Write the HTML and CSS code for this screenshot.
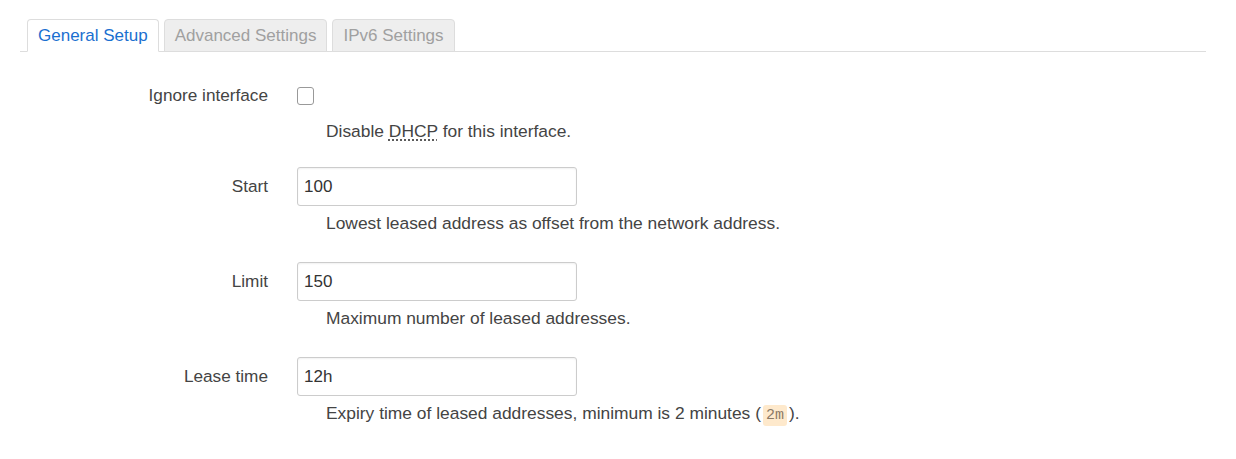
FILE: index.html
```html
<!DOCTYPE html>
<html>
<head>
<meta charset="utf-8">
<link rel="stylesheet" href="styles.css">
</head>
<body>
<div class="page">
  <ul class="tabs">
    <li class="tab active">General Setup</li>
    <li class="tab">Advanced Settings</li>
    <li class="tab">IPv6 Settings</li>
  </ul>
  <div class="form">
    <div class="row row-check">
      <label class="lbl">Ignore interface</label>
      <div class="field">
        <div class="control"><span class="checkbox"></span></div>
        <div class="desc">Disable <abbr class="abbr">DHCP</abbr> for this interface.</div>
      </div>
    </div>
    <div class="row">
      <label class="lbl">Start</label>
      <div class="field">
        <div class="control"><div class="input">100</div></div>
        <div class="desc">Lowest leased address as offset from the network address.</div>
      </div>
    </div>
    <div class="row">
      <label class="lbl">Limit</label>
      <div class="field">
        <div class="control"><div class="input">150</div></div>
        <div class="desc">Maximum number of leased addresses.</div>
      </div>
    </div>
    <div class="row">
      <label class="lbl">Lease time</label>
      <div class="field">
        <div class="control"><div class="input">12h</div></div>
        <div class="desc">Expiry time of leased addresses, minimum is 2 minutes (<code class="code">2m</code>).</div>
      </div>
    </div>
  </div>
</div>
</body>
</html>
```

FILE: styles.css
```css
* { box-sizing: border-box; }
html, body { margin: 0; padding: 0; background: #fff; }
body {
  font-family: "Liberation Sans", Arial, sans-serif;
  font-size: 17px;
  color: #404040;
}
.page {
  padding: 19px 30px 0 20px;
}
.tabs {
  list-style: none;
  margin: 0;
  padding: 0 0 0 7px;
  display: flex;
  gap: 5px;
  border-bottom: 1px solid #ddd;
}
.tab {
  padding: 0 10px;
  line-height: 31px;
  border: 1px solid #ddd;
  border-radius: 4px 4px 0 0;
  margin-bottom: -1px;
  background: #eee;
  color: #a0a0a0;
  white-space: nowrap;
}
.tab.active {
  background: #fff;
  color: #1a6fd0;
  border-bottom-color: #fff;
}
.form {
  padding-top: 24px;
}
.row {
  display: grid;
  grid-template-columns: 248px 1fr;
  column-gap: 29px;
  margin-bottom: 29px;
}
.row-check {
  margin-bottom: 26px;
}
.lbl {
  text-align: right;
  line-height: 39px;
  font-size: 17.2px;
  color: #444;
  white-space: nowrap;
}
.control {
  height: 39px;
  display: flex;
  align-items: center;
}
.checkbox {
  width: 17px;
  height: 18px;
  border: 1px solid #999;
  border-radius: 3px;
  background: #fff;
}
.input {
  width: 280px;
  height: 39px;
  border: 1px solid #ccc;
  border-radius: 3px;
  box-shadow: inset 0 1px 2px rgba(0,0,0,0.06);
  padding: 0 6px;
  line-height: 37px;
  color: #333;
}
.desc {
  margin-top: 7px;
  padding-left: 29px;
  line-height: 20px;
  font-size: 17.4px;
  color: #444;
  white-space: nowrap;
}
.row-check .desc {
  margin-top: 6px;
}
.abbr {
  text-decoration: underline dotted;
  text-underline-offset: 3px;
}
.code {
  font-family: "Liberation Mono", "DejaVu Sans Mono", monospace;
  font-size: 15px;
  background: #fee9cc;
  color: #8c7a66;
  padding: 2px 3px;
  margin: 0 2px;
  border-radius: 3px;
}
```
